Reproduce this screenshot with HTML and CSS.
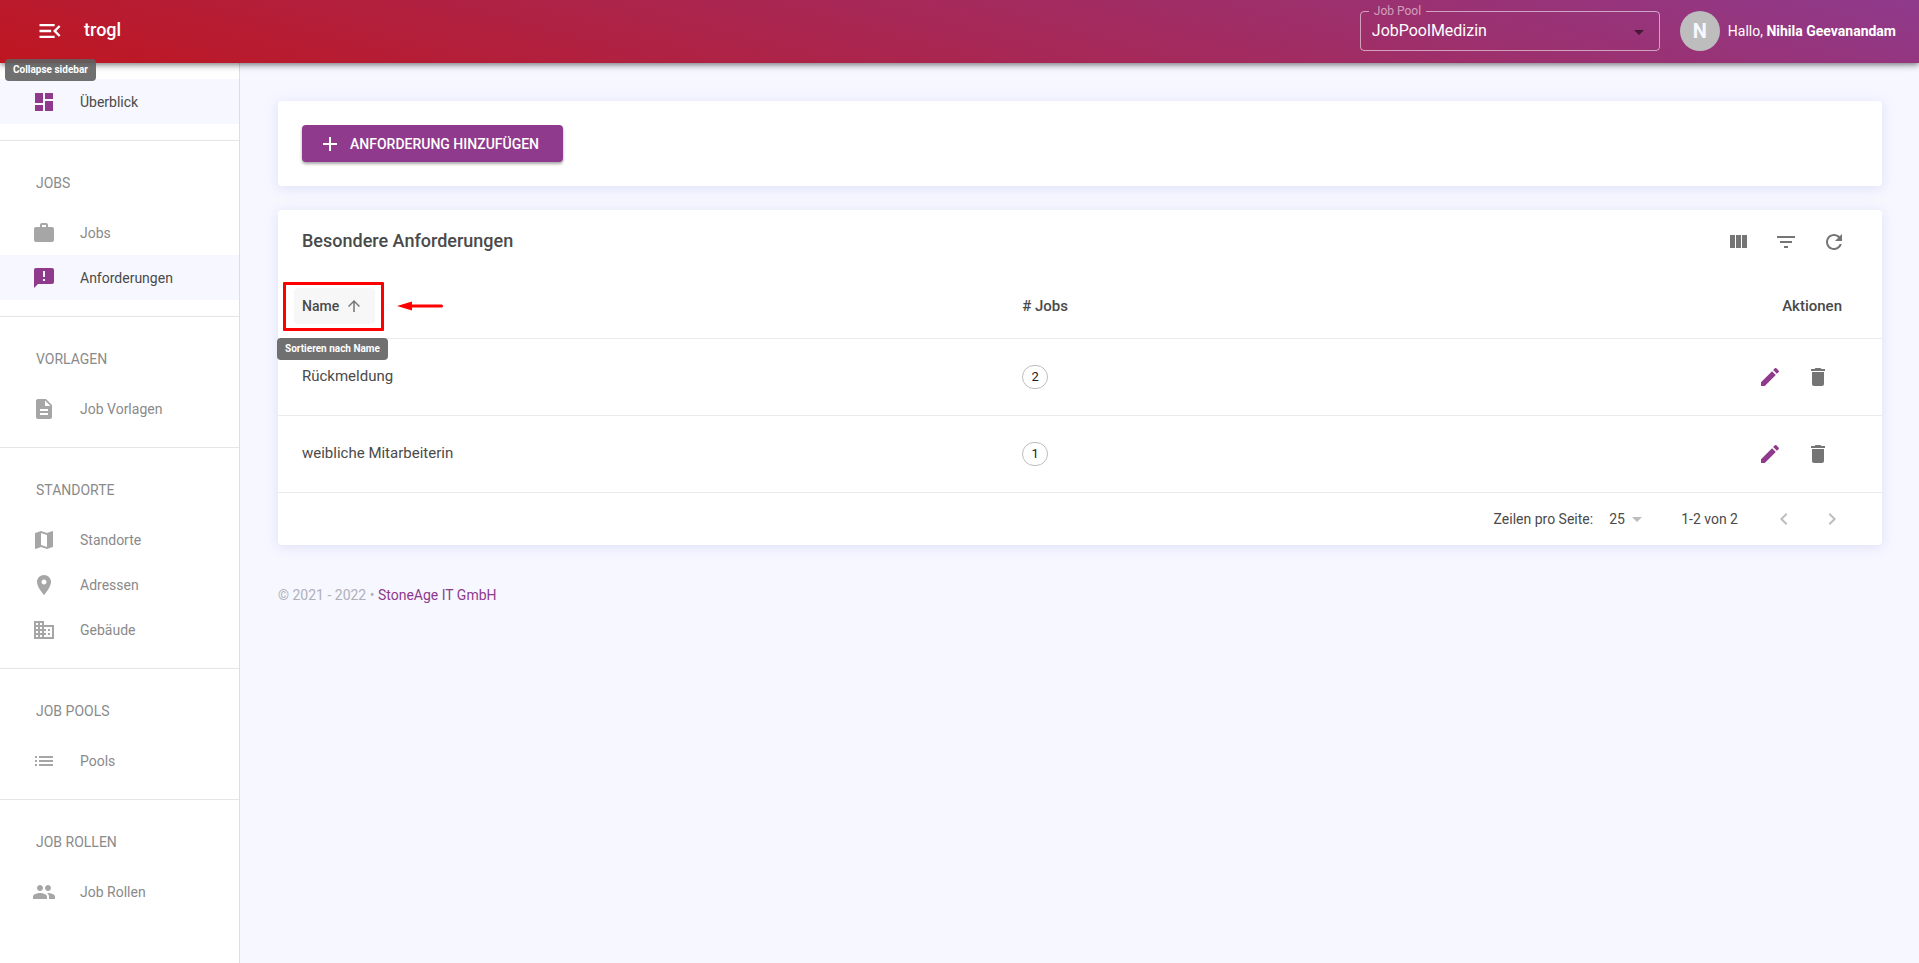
FILE: index.html
```html
<!DOCTYPE html>
<html lang="de">
<head>
<meta charset="utf-8">
<meta name="viewport" content="width=device-width, initial-scale=1">
<title>trogl – Besondere Anforderungen</title>
<link rel="stylesheet" href="styles.css">
</head>
<body>
<svg class="sprite" aria-hidden="true">
  <symbol id="i-menu" viewBox="0 0 24 24"><path d="M3 18h13v-2H3v2zm0-5h10v-2H3v2zm0-7v2h13V6H3zm18 9.59L17.42 12 21 8.41 19.59 7l-5 5 5 5L21 15.59z"/></symbol>
  <symbol id="i-dashboard" viewBox="0 0 24 24"><path d="M3 13h8V3H3v10zm0 8h8v-6H3v6zm10 0h8V11h-8v10zm0-18v6h8V3h-8z"/></symbol>
  <symbol id="i-work" viewBox="0 0 24 24"><path d="M20 6h-4V4c0-1.11-.89-2-2-2h-4c-1.11 0-2 .89-2 2v2H4c-1.11 0-1.99.89-1.99 2L2 19c0 1.11.89 2 2 2h16c1.11 0 2-.89 2-2V8c0-1.11-.89-2-2-2zm-6 0h-4V4h4v2z"/></symbol>
  <symbol id="i-announcement" viewBox="0 0 24 24"><path d="M20 2H4c-1.1 0-1.99.9-1.99 2L2 22l4-4h14c1.1 0 2-.9 2-2V4c0-1.1-.9-2-2-2zm-7 9h-2V5h2v6zm0 4h-2v-2h2v2z"/></symbol>
  <symbol id="i-description" viewBox="0 0 24 24"><path d="M14 2H6c-1.1 0-1.99.9-1.99 2L4 20c0 1.1.89 2 1.99 2H18c1.1 0 2-.9 2-2V8l-6-6zm2 16H8v-2h8v2zm0-4H8v-2h8v2zm-3-5V3.5L18.5 9H13z"/></symbol>
  <symbol id="i-map" viewBox="0 0 24 24"><path d="M20.5 3l-.16.03L15 5.1 9 3 3.36 4.9c-.21.07-.36.25-.36.48V20.5c0 .28.22.5.5.5l.16-.03L9 18.9l6 2.1 5.64-1.9c.21-.07.36-.25.36-.48V3.5c0-.28-.22-.5-.5-.5zM15 19l-6-2.11V5l6 2.11V19z"/></symbol>
  <symbol id="i-place" viewBox="0 0 24 24"><path d="M12 2C8.13 2 5 5.13 5 9c0 5.25 7 13 7 13s7-7.75 7-13c0-3.87-3.13-7-7-7zm0 9.5c-1.38 0-2.5-1.12-2.5-2.5s1.12-2.5 2.5-2.5 2.5 1.12 2.5 2.5-1.12 2.5-2.5 2.5z"/></symbol>
  <symbol id="i-business" viewBox="0 0 24 24"><path d="M12 7V3H2v18h20V7H12zM6 19H4v-2h2v2zm0-4H4v-2h2v2zm0-4H4V9h2v2zm0-4H4V5h2v2zm4 12H8v-2h2v2zm0-4H8v-2h2v2zm0-4H8V9h2v2zm0-4H8V5h2v2zm10 12h-8v-2h2v-2h-2v-2h2v-2h-2V9h8v10zm-2-8h-2v2h2v-2zm0 4h-2v2h2v-2z"/></symbol>
  <symbol id="i-list" viewBox="0 0 24 24"><path d="M3 13h2v-2H3v2zm0 4h2v-2H3v2zm0-8h2V7H3v2zm4 4h14v-2H7v2zm0 4h14v-2H7v2zM7 7v2h14V7H7z"/></symbol>
  <symbol id="i-people" viewBox="0 0 24 24"><path d="M16 11c1.66 0 2.99-1.34 2.99-3S17.66 5 16 5c-1.66 0-3 1.34-3 3s1.34 3 3 3zm-8 0c1.66 0 2.99-1.34 2.99-3S9.66 5 8 5C6.34 5 5 6.34 5 8s1.34 3 3 3zm0 2c-2.33 0-7 1.17-7 3.5V19h14v-2.5c0-2.33-4.67-3.5-7-3.5zm8 0c-.29 0-.62.02-.97.05 1.16.84 1.97 1.97 1.97 3.45V19h6v-2.5c0-2.33-4.67-3.5-7-3.5z"/></symbol>
  <symbol id="i-add" viewBox="0 0 24 24"><path d="M19 13h-6v6h-2v-6H5v-2h6V5h2v6h6v2z"/></symbol>
  <symbol id="i-columns" viewBox="0 0 24 24"><path d="M10 18h5V5h-5v13zm-6 0h5V5H4v13zM16 5v13h5V5h-5z"/></symbol>
  <symbol id="i-filter" viewBox="0 0 24 24"><path d="M10 18h4v-2h-4v2zM3 6v2h18V6H3zm3 7h12v-2H6v2z"/></symbol>
  <symbol id="i-refresh" viewBox="0 0 24 24"><path d="M17.65 6.35C16.2 4.9 14.21 4 12 4c-4.42 0-7.99 3.58-7.99 8s3.57 8 7.99 8c3.73 0 6.84-2.55 7.73-6h-2.08c-.82 2.33-3.04 4-5.65 4-3.31 0-6-2.69-6-6s2.69-6 6-6c1.66 0 3.14.69 4.22 1.78L13 11h7V4l-2.35 2.35z"/></symbol>
  <symbol id="i-up" viewBox="0 0 24 24"><path d="M4 12l1.41 1.41L11 7.83V20h2V7.83l5.58 5.59L20 12l-8-8-8 8z"/></symbol>
  <symbol id="i-edit" viewBox="0 0 24 24"><path d="M3 17.25V21h3.75L17.81 9.94l-3.75-3.75L3 17.25zM20.71 7.04c.39-.39.39-1.02 0-1.41l-2.34-2.34c-.39-.39-1.02-.39-1.41 0l-1.83 1.83 3.75 3.75 1.83-1.83z"/></symbol>
  <symbol id="i-delete" viewBox="0 0 24 24"><path d="M6 19c0 1.1.9 2 2 2h8c1.1 0 2-.9 2-2V7H6v12zM19 4h-3.5l-1-1h-5l-1 1H5v2h14V4z"/></symbol>
  <symbol id="i-drop" viewBox="0 0 24 24"><path d="M7 10l5 5 5-5z"/></symbol>
  <symbol id="i-left" viewBox="0 0 24 24"><path d="M15.41 7.41L14 6l-6 6 6 6 1.41-1.41L10.83 12z"/></symbol>
  <symbol id="i-right" viewBox="0 0 24 24"><path d="M10 6L8.59 7.41 13.17 12l-4.58 4.59L10 18l6-6z"/></symbol>
</svg>

<header class="topbar">
  <button class="menu-button" type="button" aria-label="Collapse sidebar" aria-describedby="tip-menu">
    <svg class="icon icon-large"><use href="#i-menu"/></svg>
  </button>
  <span class="tooltip tooltip-menu" id="tip-menu" role="tooltip">Collapse sidebar</span>
  <a class="brand" href="#">trogl</a>
  <fieldset class="pool">
    <legend class="pool-legend"><label for="pool">Job Pool</label></legend>
    <select class="pool-select" id="pool"><option>JobPoolMedizin</option></select>
    <svg class="icon pool-arrow"><use href="#i-drop"/></svg>
  </fieldset>
  <div class="user">
    <span class="avatar">N</span>
    <span>Hallo, <strong>Nihila Geevanandam</strong></span>
  </div>
</header>

<div class="layout">
  <nav class="sidebar">
    <section class="group">
      <a class="item item-active" href="#"><svg class="icon"><use href="#i-dashboard"/></svg>Überblick</a>
    </section>
    <section class="group">
      <h2 class="group-title">JOBS</h2>
      <a class="item" href="#"><svg class="icon"><use href="#i-work"/></svg>Jobs</a>
      <a class="item item-active" href="#"><svg class="icon"><use href="#i-announcement"/></svg>Anforderungen</a>
    </section>
    <section class="group">
      <h2 class="group-title">VORLAGEN</h2>
      <a class="item" href="#"><svg class="icon"><use href="#i-description"/></svg>Job Vorlagen</a>
    </section>
    <section class="group">
      <h2 class="group-title">STANDORTE</h2>
      <a class="item" href="#"><svg class="icon"><use href="#i-map"/></svg>Standorte</a>
      <a class="item" href="#"><svg class="icon"><use href="#i-place"/></svg>Adressen</a>
      <a class="item" href="#"><svg class="icon"><use href="#i-business"/></svg>Gebäude</a>
    </section>
    <section class="group">
      <h2 class="group-title">JOB POOLS</h2>
      <a class="item" href="#"><svg class="icon"><use href="#i-list"/></svg>Pools</a>
    </section>
    <section class="group">
      <h2 class="group-title">JOB ROLLEN</h2>
      <a class="item" href="#"><svg class="icon"><use href="#i-people"/></svg>Job Rollen</a>
    </section>
  </nav>

  <main class="content">
    <section class="card card-actions">
      <button class="add-button" type="button"><svg class="icon"><use href="#i-add"/></svg>ANFORDERUNG HINZUFÜGEN</button>
    </section>

    <section class="card">
      <div class="card-head">
        <h1 class="card-title">Besondere Anforderungen</h1>
        <div class="tools">
          <button class="icon-button" type="button" aria-label="Spalten"><svg class="icon"><use href="#i-columns"/></svg></button>
          <button class="icon-button" type="button" aria-label="Filter"><svg class="icon"><use href="#i-filter"/></svg></button>
          <button class="icon-button" type="button" aria-label="Aktualisieren"><svg class="icon"><use href="#i-refresh"/></svg></button>
        </div>
      </div>
      <table class="table">
        <thead>
          <tr>
            <th class="col-name" scope="col">
              <div class="sort-cell">
                <button class="sort-button" type="button" aria-describedby="tip-sort">Name<svg class="icon icon-small"><use href="#i-up"/></svg></button>
                <span class="marker"></span>
                <svg class="marker-arrow" viewBox="0 0 46 10"><path d="M0 5 15 0.5V3.5H44.5a1.5 1.5 0 0 1 0 3H15V9.5z"/></svg>
                <span class="tooltip tooltip-sort" id="tip-sort" role="tooltip">Sortieren nach Name</span>
              </div>
            </th>
            <th class="col-jobs" scope="col"># Jobs</th>
            <th class="col-actions" scope="col">Aktionen</th>
          </tr>
        </thead>
        <tbody>
          <tr>
            <td class="col-name">Rückmeldung</td>
            <td class="col-jobs"><span class="chip">2</span></td>
            <td class="col-actions"><div class="row-actions">
              <button class="icon-button icon-button-primary" type="button" aria-label="Bearbeiten"><svg class="icon"><use href="#i-edit"/></svg></button>
              <button class="icon-button" type="button" aria-label="Löschen"><svg class="icon"><use href="#i-delete"/></svg></button>
            </div></td>
          </tr>
          <tr>
            <td class="col-name">weibliche Mitarbeiterin</td>
            <td class="col-jobs"><span class="chip">1</span></td>
            <td class="col-actions"><div class="row-actions">
              <button class="icon-button icon-button-primary" type="button" aria-label="Bearbeiten"><svg class="icon"><use href="#i-edit"/></svg></button>
              <button class="icon-button" type="button" aria-label="Löschen"><svg class="icon"><use href="#i-delete"/></svg></button>
            </div></td>
          </tr>
        </tbody>
      </table>
      <div class="pagination">
        <label for="rows">Zeilen pro Seite:</label>
        <span class="rows">
          <select class="rows-select" id="rows"><option>25</option></select>
          <svg class="icon rows-arrow"><use href="#i-drop"/></svg>
        </span>
        <span class="range">1-2 von 2</span>
        <div class="pager">
          <button class="icon-button" type="button" aria-label="Vorherige Seite" disabled><svg class="icon"><use href="#i-left"/></svg></button>
          <button class="icon-button" type="button" aria-label="Nächste Seite" disabled><svg class="icon"><use href="#i-right"/></svg></button>
        </div>
      </div>
    </section>

    <footer class="footer">© 2021 - 2022 • <a class="footer-link" href="#">StoneAge IT GmbH</a></footer>
  </main>
</div>
</body>
</html>
```
FILE: styles.css
```css
:root {
  --primary: #8f3a8c;
  --text: #4a4a4a;
  --muted: #8a8a8a;
  --icon: #757575;
  --page: #f6f7ff;
  --line: #ebebeb;
}

*,
*::before,
*::after {
  box-sizing: border-box;
}

body {
  margin: 0;
  min-height: 100vh;
  display: flex;
  flex-direction: column;
  background: var(--page);
  color: var(--text);
  font-family: Roboto, "Liberation Sans", sans-serif;
  font-size: 14px;
  line-height: 20px;
}

a {
  color: inherit;
  text-decoration: none;
}

button,
select {
  margin: 0;
  padding: 0;
  border: 0;
  background: none;
  color: inherit;
  font: inherit;
}

button {
  cursor: pointer;
}

select {
  appearance: none;
}

.sprite {
  position: absolute;
  width: 0;
  height: 0;
}

.icon {
  flex: none;
  width: 24px;
  height: 24px;
  fill: currentColor;
}

.icon-large {
  width: 28px;
  height: 28px;
}

.icon-small {
  width: 18px;
  height: 18px;
}

/* Top bar */

.topbar {
  position: relative;
  z-index: 2;
  display: flex;
  align-items: center;
  height: 63px;
  padding: 0 23px 1px 36px;
  background: linear-gradient(15deg, #bf1620, #8f3a8c);
  box-shadow: 0 2px 4px -1px rgba(0, 0, 0, 0.3), 0 4px 5px rgba(0, 0, 0, 0.16), 0 1px 10px rgba(0, 0, 0, 0.12);
  color: #fff;
}

.menu-button {
  display: flex;
}

.brand {
  margin-left: 20px;
  padding-bottom: 2px;
  font-size: 18px;
  font-weight: 500;
}

.pool {
  position: relative;
  width: 300px;
  min-width: 0;
  margin: 0 20px 0 auto;
  padding: 0;
  border: 1px solid rgba(255, 255, 255, 0.55);
  border-radius: 4px;
}

.pool-legend {
  height: 1px;
  margin-left: 8px;
  padding: 0 5px;
  color: rgba(255, 255, 255, 0.55);
  font-size: 12px;
  line-height: 1px;
}

.pool-select {
  display: block;
  width: 100%;
  height: 38px;
  padding: 0 32px 0 11px;
  font-size: 16px;
}

.pool-arrow {
  position: absolute;
  top: 8px;
  right: 8px;
  color: rgba(0, 0, 0, 0.54);
  pointer-events: none;
}

.user {
  display: flex;
  align-items: center;
  gap: 8px;
}

.user strong {
  font-weight: 700;
}

.avatar {
  display: flex;
  align-items: center;
  justify-content: center;
  width: 40px;
  height: 40px;
  border-radius: 50%;
  background: #bdbdbd;
  color: var(--page);
  font-size: 20px;
  font-weight: 700;
}

.tooltip {
  position: absolute;
  z-index: 3;
  padding: 4px 8px;
  border-radius: 4px;
  background: rgba(97, 97, 97, 0.9);
  color: #fff;
  font-size: 10px;
  font-weight: 700;
  line-height: 14px;
  white-space: nowrap;
}

.tooltip-menu {
  top: 59px;
  left: 5px;
}

/* Layout and sidebar */

.layout {
  flex: 1;
  display: flex;
}

.sidebar {
  flex: none;
  width: 240px;
  border-right: 1px solid #dedede;
  background: #fff;
}

.group {
  padding-bottom: 16px;
  border-bottom: 1px solid #e6e6e6;
}

.group:first-child {
  padding-top: 16px;
}

.group:last-child {
  border-bottom: 0;
}

.group-title {
  margin: 0;
  padding: 32px 36px 17px;
  color: var(--muted);
  font-size: 14px;
  font-weight: 400;
}

.item {
  display: flex;
  align-items: center;
  gap: 24px;
  height: 45px;
  padding-left: 32px;
  color: var(--muted);
}

.item .icon {
  color: #a6a6a6;
}

.item-active {
  background: var(--page);
  color: var(--text);
}

.item-active .icon {
  color: var(--primary);
}

/* Content */

.content {
  flex: 1;
  min-width: 0;
  display: flex;
  flex-direction: column;
  gap: 24px;
  padding: 38px 37px 38px 38px;
}

.card {
  border-radius: 4px;
  background: #fff;
  box-shadow: 0 2px 12px rgba(200, 204, 240, 0.5);
}

.card-actions {
  padding: 24px;
}

.add-button {
  display: flex;
  align-items: center;
  gap: 8px;
  height: 37px;
  padding: 0 24px 0 16px;
  border-radius: 4px;
  background: var(--primary);
  box-shadow: 0 2px 3px rgba(0, 0, 0, 0.35);
  color: #fff;
  font-weight: 500;
}

.card-head {
  display: flex;
  align-items: center;
  justify-content: space-between;
  height: 64px;
  padding: 0 24px;
}

.card-title {
  margin: 0;
  padding-bottom: 2px;
  font-size: 18px;
  font-weight: 500;
}

.tools,
.row-actions,
.pager {
  display: flex;
}

.icon-button {
  display: flex;
  align-items: center;
  justify-content: center;
  width: 48px;
  height: 48px;
  color: var(--icon);
}

.icon-button-primary {
  color: var(--primary);
}

.icon-button:disabled {
  color: #bdbdbd;
}

.table {
  width: 100%;
  table-layout: fixed;
  border-collapse: separate;
  border-spacing: 0;
  font-size: 15px;
}

.table th,
.table td {
  padding: 0 16px;
  border-bottom: 1px solid var(--line);
  text-align: left;
}

.table th {
  height: 65px;
  font-weight: 500;
}

.table td {
  height: 77px;
}

.table .col-name {
  width: 45.4%;
  padding-left: 24px;
}

.table td.col-name {
  padding-bottom: 2px;
}

.table th.col-name {
  padding-left: 16px;
}

.table .col-actions {
  padding-right: 40px;
  text-align: right;
}

.row-actions {
  justify-content: flex-end;
}

.sort-cell {
  position: relative;
}

.sort-button {
  display: flex;
  align-items: center;
  gap: 6px;
  height: 36px;
  padding: 0 12px 0 8px;
  border-radius: 4px;
  background: #f7f7f7;
  font-size: 14px;
}

.sort-button .icon {
  color: var(--icon);
}

.marker {
  position: absolute;
  top: -6px;
  left: -11px;
  width: 101px;
  height: 49px;
  border: 3px solid #f00;
  border-radius: 1px;
}

.marker-arrow {
  position: absolute;
  top: 13px;
  left: 103px;
  width: 46px;
  height: 10px;
  fill: #f00;
}

.tooltip-sort {
  top: 50px;
  left: -17px;
}

.chip {
  display: flex;
  align-items: center;
  justify-content: center;
  width: 26px;
  height: 24px;
  border: 1px solid #bdbdbd;
  border-radius: 12px;
  color: #212121;
  font-size: 13px;
}

.pagination {
  display: flex;
  align-items: center;
  justify-content: flex-end;
  height: 52px;
  padding-right: 26px;
}

.rows {
  position: relative;
  margin: 0 32px 0 16px;
}

.rows-select {
  display: block;
  width: 40px;
  height: 24px;
}

.rows-arrow {
  position: absolute;
  top: 0;
  right: 0;
  color: #bdbdbd;
  pointer-events: none;
}

.range {
  margin-right: 22px;
}

.footer {
  padding-top: 16px;
  color: #b0b0b8;
}

.footer-link {
  color: var(--primary);
}
```
